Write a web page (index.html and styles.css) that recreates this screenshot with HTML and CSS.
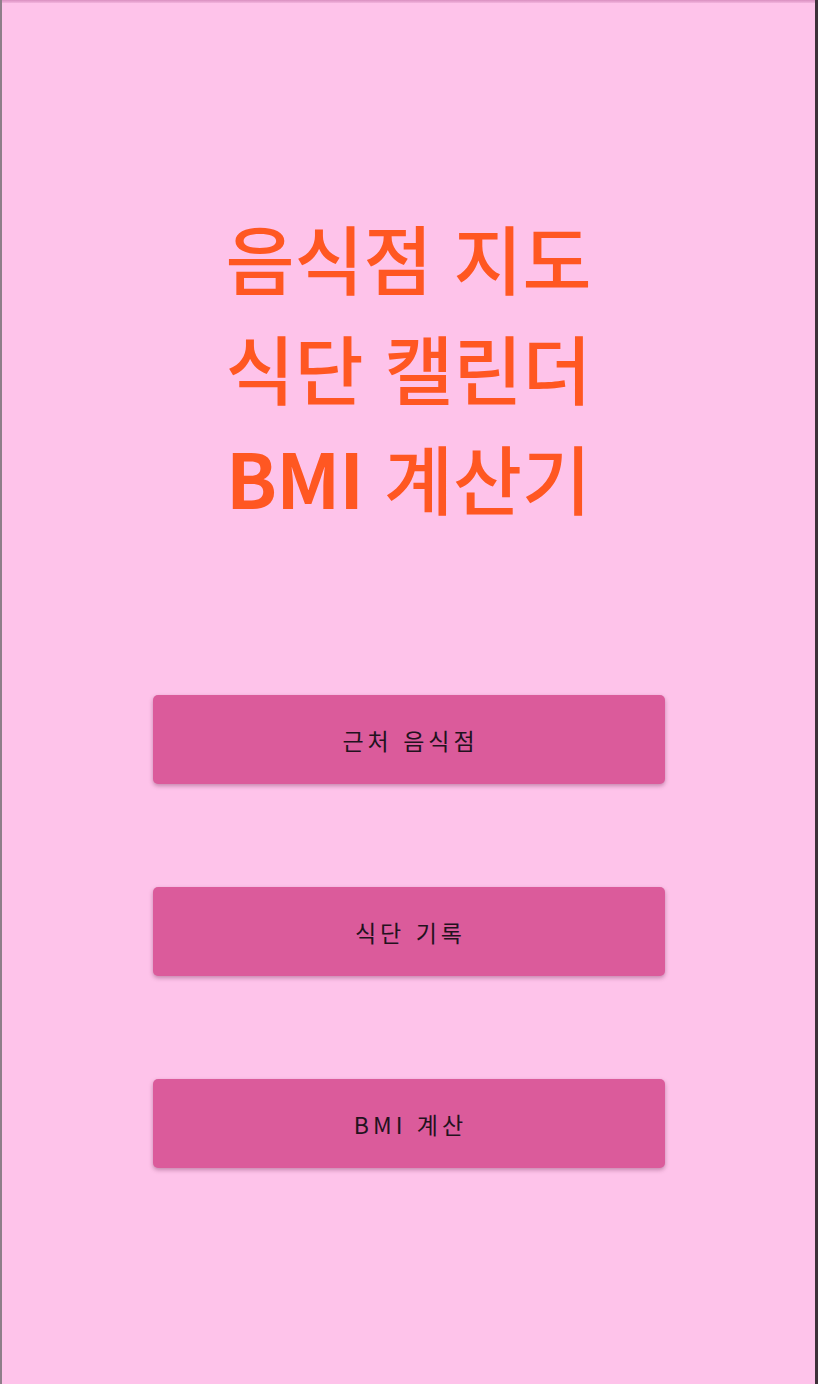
FILE: index.html
```html
<!DOCTYPE html>
<html lang="ko">
<head>
<meta charset="utf-8">
<link rel="stylesheet" href="styles.css">
</head>
<body>
<div class="screen">
  <div class="topbar"></div>
  <h1 class="title">
    <span class="line">음식점 지도</span>
    <span class="line">식단 캘린더</span>
    <span class="line"><span class="latin">BMI</span> 계산기</span>
  </h1>
  <div class="buttons">
    <button class="btn">근처 음식점</button>
    <button class="btn">식단 기록</button>
    <button class="btn">BMI 계산</button>
  </div>
</div>
</body>
</html>
```
FILE: styles.css
```css
html, body {
  margin: 0;
  padding: 0;
  background: #fec3ea;
}
.screen {
  width: 818px;
  height: 1384px;
  box-sizing: border-box;
  background: #fec3ea;
  border-left: 2px solid #8e7f8a;
  border-right: 3px solid #3d3139;
  display: flex;
  flex-direction: column;
  align-items: center;
  font-family: "Noto Sans CJK KR", "Noto Sans", sans-serif;
}
.topbar {
  align-self: stretch;
  height: 3px;
  background: linear-gradient(#d98fc0, #f3b4de);
}
.title {
  margin: 199px 0 0 0;
  display: flex;
  flex-direction: column;
  align-items: center;
  color: #ff5722;
  font-size: 75px;
  font-weight: 500;
  line-height: 110px;
}
.latin {
  font-weight: 700;
  letter-spacing: -1px;
}
.buttons {
  margin-top: 163px;
  display: flex;
  flex-direction: column;
  gap: 103px;
}
.btn {
  width: 512px;
  height: 89px;
  border: none;
  border-radius: 5px;
  background: #db5b9b;
  box-shadow: 0 2px 4px rgba(90, 20, 60, 0.35);
  color: #22121d;
  font-family: "Noto Sans CJK KR", "Noto Sans", sans-serif;
  font-size: 23px;
  font-weight: 400;
  letter-spacing: 4px;
  padding: 0 0 0 4px;
}
```
